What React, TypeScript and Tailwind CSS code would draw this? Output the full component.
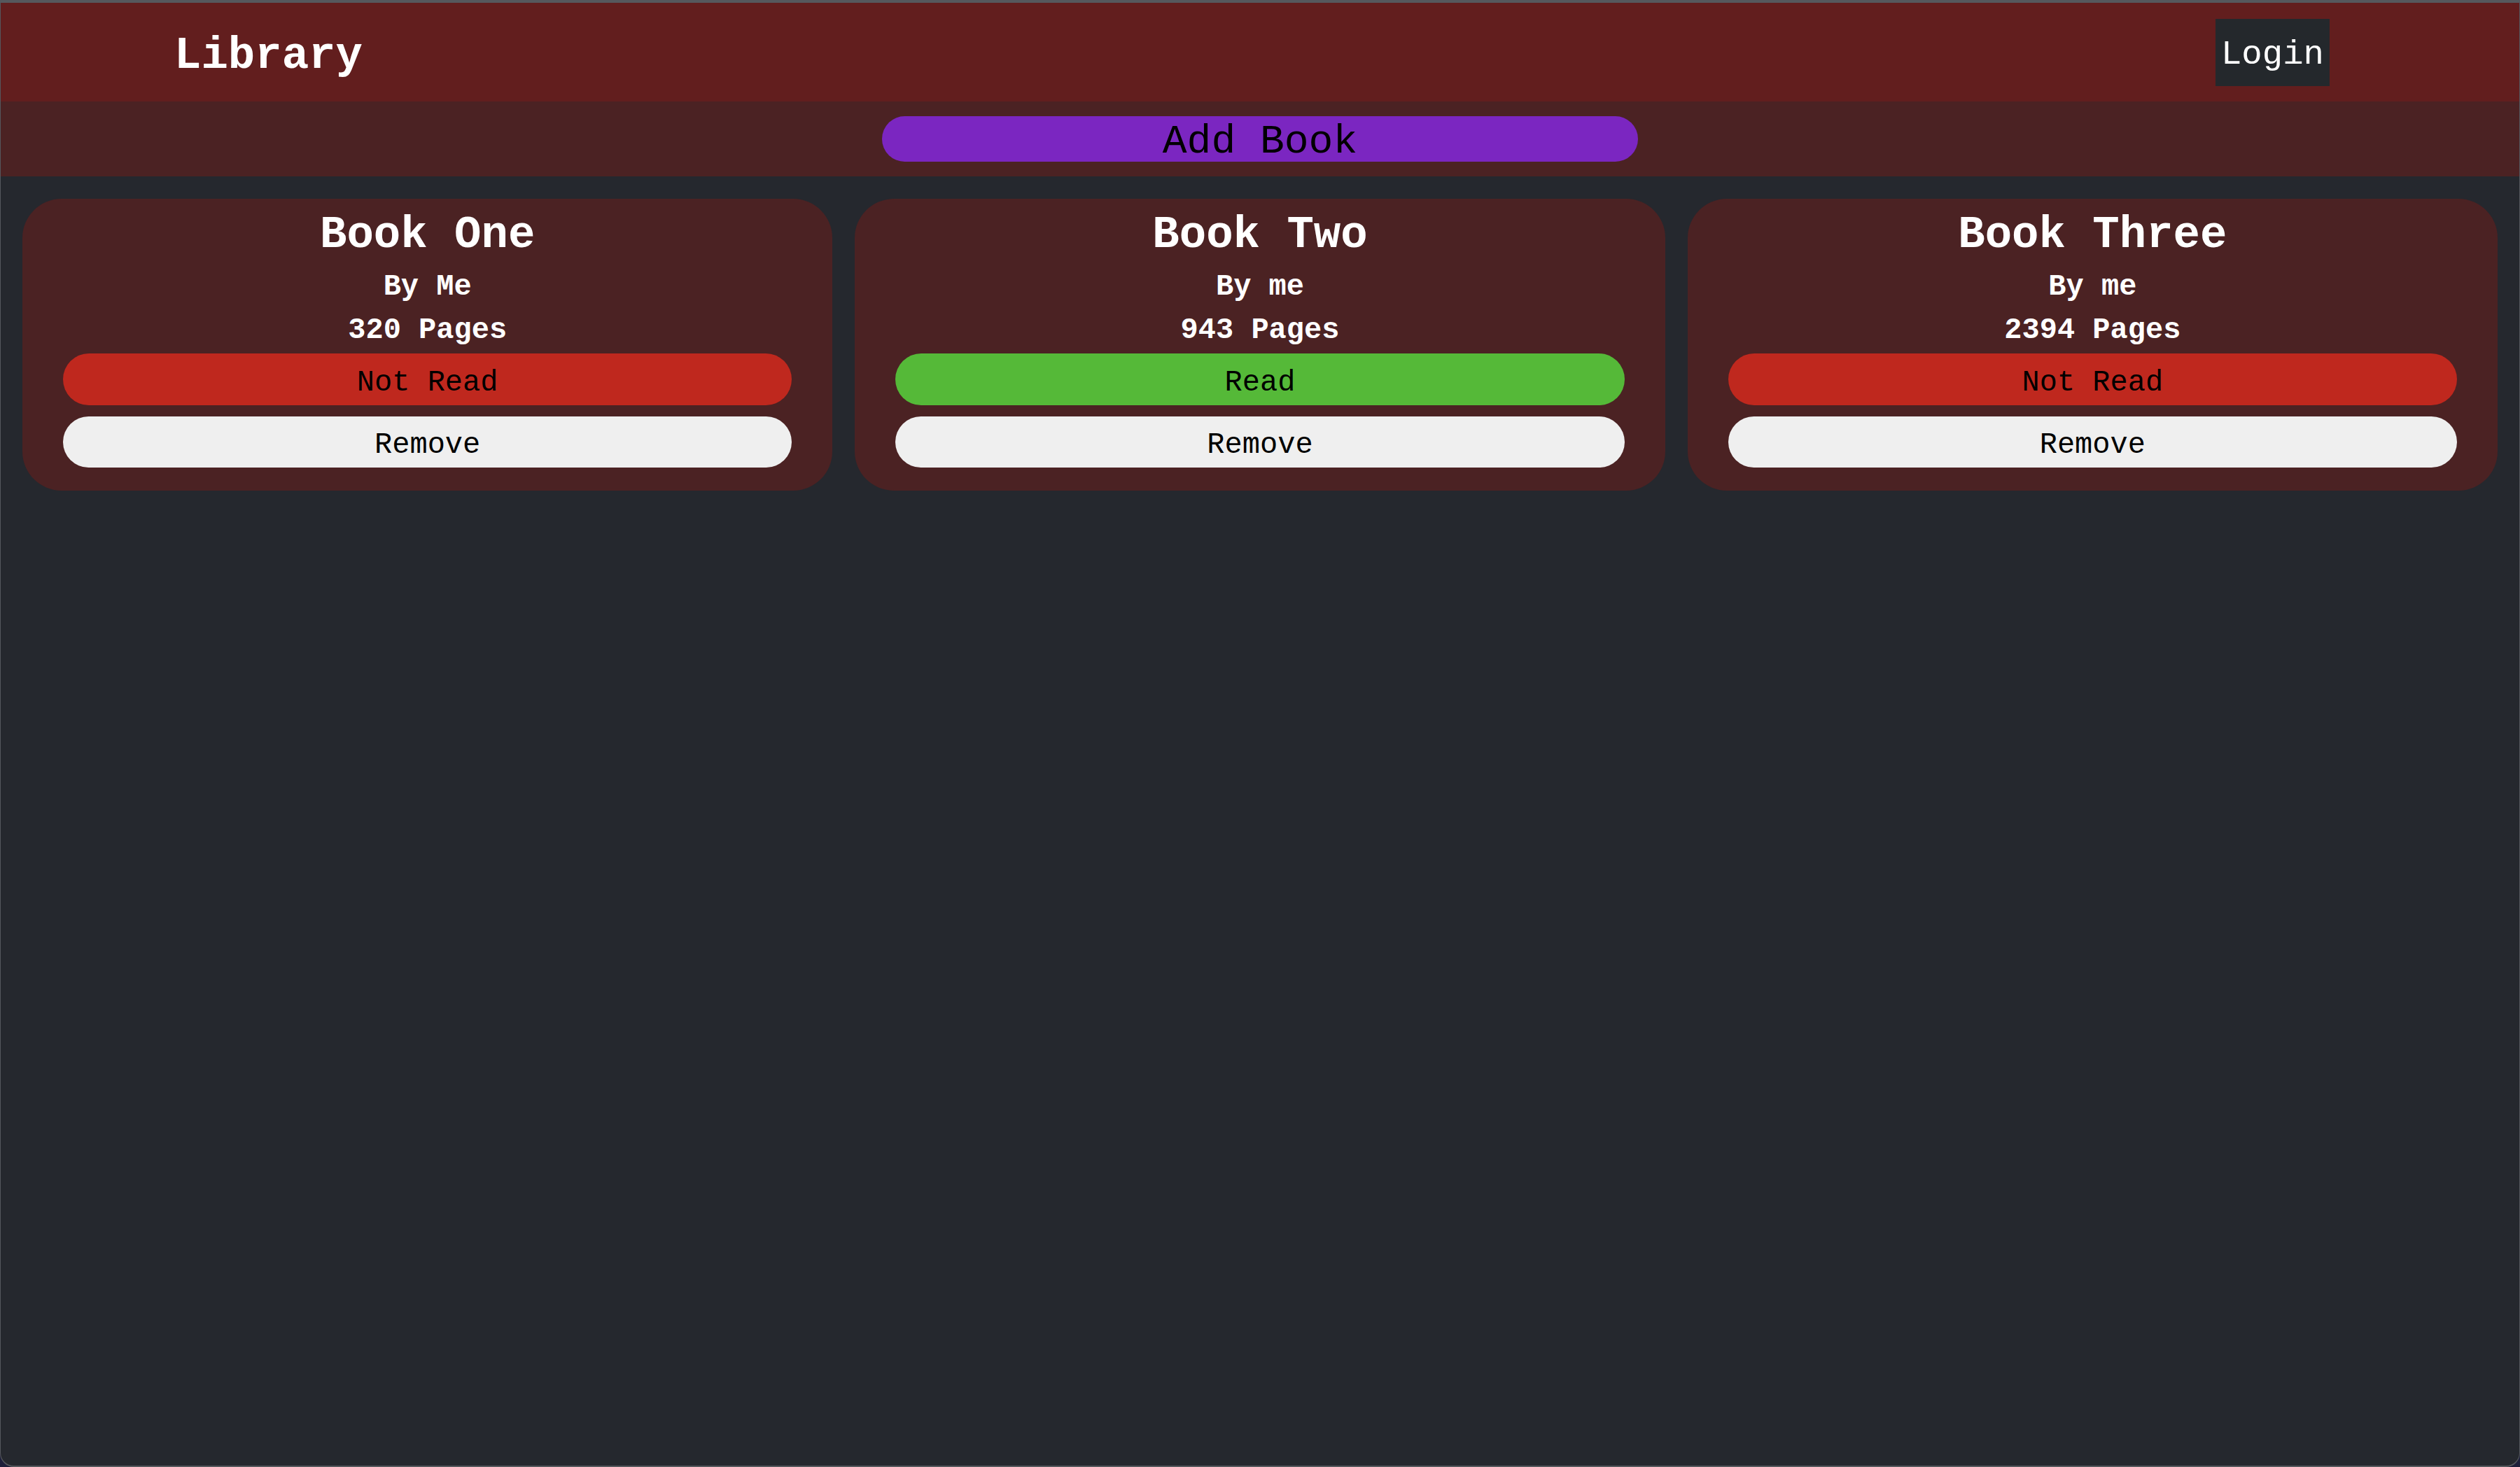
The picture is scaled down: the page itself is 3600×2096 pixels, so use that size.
import React, { useState } from 'react';

type Book = {
  id: number;
  title: string;
  author: string;
  pages: number;
  read: boolean;
};

const initialBooks: Book[] = [
  { id: 1, title: 'Book One', author: 'Me', pages: 320, read: false },
  { id: 2, title: 'Book Two', author: 'me', pages: 943, read: true },
  { id: 3, title: 'Book Three', author: 'me', pages: 2394, read: false },
];

const mono = "font-['Courier_New','Liberation_Mono',monospace]";

const BookCard: React.FC<{ book: Book; onToggle: () => void; onRemove: () => void }> = ({
  book,
  onToggle,
  onRemove,
}) => {
  return (
    <div className="flex flex-col items-center bg-[#4b2223] rounded-[56px] pt-[16px] pb-[33px] text-white">
      <h2 className="text-[64px] font-bold leading-[72px]">{book.title}</h2>
      <p className="mt-[14px] text-[42px] font-bold leading-[48px]">By {book.author}</p>
      <p className="mt-[14px] text-[42px] font-bold leading-[48px]">{book.pages} Pages</p>
      <button
        onClick={onToggle}
        className={`mt-[9px] w-[90%] h-[74px] pt-[10px] rounded-full text-[42px] text-black ${
          book.read ? 'bg-[#55b938]' : 'bg-[#bf281e]'
        }`}
      >
        {book.read ? 'Read' : 'Not Read'}
      </button>
      <button
        onClick={onRemove}
        className="mt-[16px] w-[90%] h-[73px] pt-[10px] rounded-full bg-[#efefef] text-[42px] text-black"
      >
        Remove
      </button>
    </div>
  );
};

export default function App() {
  const [books, setBooks] = useState<Book[]>(initialBooks);

  const toggleRead = (id: number) => {
    setBooks((prev) => prev.map((b) => (b.id === id ? { ...b, read: !b.read } : b)));
  };

  const removeBook = (id: number) => {
    setBooks((prev) => prev.filter((b) => b.id !== id));
  };

  return (
    <div className={`h-screen bg-[#1e1f3a] ${mono}`}>
      <div className="h-full flex flex-col bg-[#25282e] border-x border-b-2 border-t-[4px] border-[#55585d] rounded-b-[20px] overflow-hidden">
        <header className="h-[141px] shrink-0 flex items-center justify-between bg-[#621e1e] pl-[248px] pr-[271px]">
          <h1 className="pt-[10px] text-[64px] font-bold text-white">Library</h1>
          <button className="h-[96px] px-[8px] pt-[8px] bg-[#24282c] text-[49px] text-white">Login</button>
        </header>

        <div className="shrink-0 flex justify-center bg-[#4b2223] py-[21px]">
          <button className="w-[1080px] h-[65px] pt-[8px] rounded-full bg-[#7b26c1] text-[58px] leading-none text-black">
            Add Book
          </button>
        </div>

        <main className="grid grid-cols-3 gap-[32px] px-[31px] pt-[32px]">
          {books.map((book) => (
            <BookCard
              key={book.id}
              book={book}
              onToggle={() => toggleRead(book.id)}
              onRemove={() => removeBook(book.id)}
            />
          ))}
        </main>
      </div>
    </div>
  );
}
